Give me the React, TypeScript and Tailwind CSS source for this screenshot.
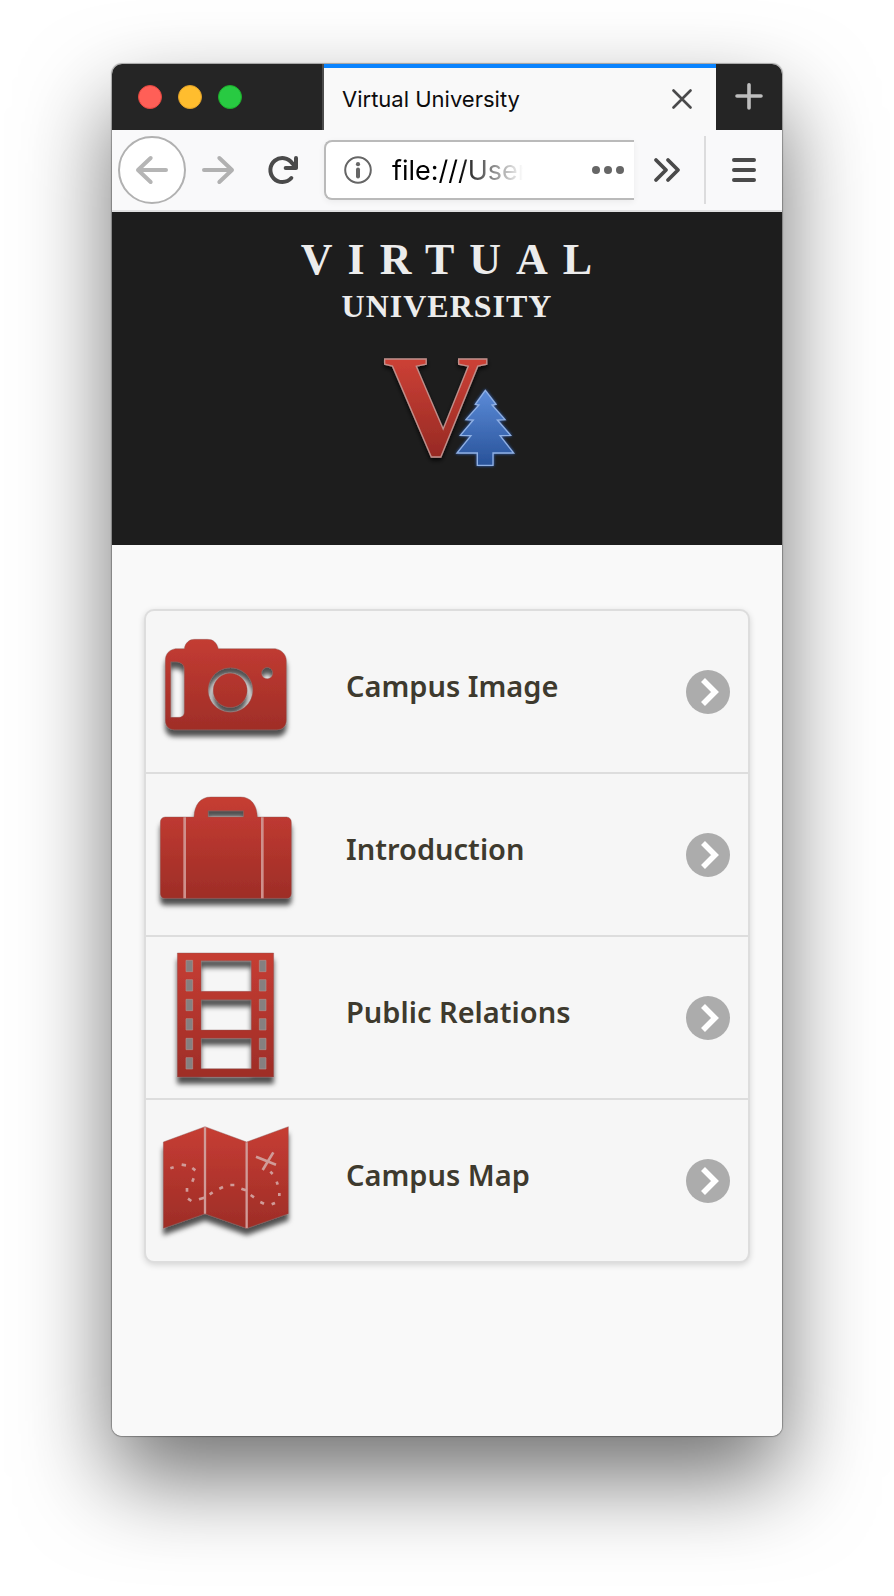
import type { ReactNode } from "react";

function Shaded({ id, y1, y2, children }: { id: string; y1: number; y2: number; children: ReactNode }) {
  return (
    <>
      <defs>
        <linearGradient id={`${id}-fill`} gradientUnits="userSpaceOnUse" x1="0" y1={y1} x2="0" y2={y2}>
          <stop offset="0" stopColor="#c63d33" />
          <stop offset="1" stopColor="#9e2d27" />
        </linearGradient>
        <filter id={`${id}-shadow`} x="-20%" y="-20%" width="140%" height="150%">
          <feDropShadow dx="0" dy="20" stdDeviation="8" floodColor="#000" floodOpacity="0.68" />
        </filter>
      </defs>
      <g
        fill={`url(#${id}-fill)`}
        fillRule="evenodd"
        filter={`url(#${id}-shadow)`}
        stroke="#8a5a57"
        strokeOpacity="0.4"
        strokeWidth="3"
      >
        {children}
      </g>
    </>
  );
}

function CameraIcon() {
  return (
    <svg viewBox="48 33 480 483" className="h-full w-full" aria-hidden="true">
      <Shaded id="camera" y1={100} y2={400}>
        <path d="M163 146C166 128 178 118 194 118H232C250 118 260 128 265 146H436C456 150 469 164 469 182V360C469 378 458 389 440 389H134C116 389 106 378 106 360V182C106 162 116 150 136 146ZM122 185V352H144C156 352 163 346 163 336V206C163 194 152 185 138 185ZM301 203A67 67 0 1 0 302 203ZM301 220A51 51 0 1 1 300 220ZM411 202A17 17 0 1 0 412 202Z" />
      </Shaded>
    </svg>
  );
}

function SuitcaseIcon() {
  return (
    <svg viewBox="48 12 480 483" className="h-full w-full" aria-hidden="true">
      <Shaded id="case" y1={82} y2={385}>
        <path d="M192 141C193 104 212 81 242 81H332C362 81 381 104 382 141H470Q484 143 484 157V370Q484 385 470 385H105Q91 385 91 370V157Q91 143 105 141ZM234 122V141H341V122Z" />
      </Shaded>
      <path d="M164 142V385M397 142V385" stroke="#cf8f8b" strokeWidth="8" />
    </svg>
  );
}

const filmSlots = [88, 146, 205, 263, 322, 380];

function FilmIcon() {
  return (
    <svg viewBox="48 18 480 483" className="h-full w-full" aria-hidden="true">
      <Shaded id="film" y1={66} y2={438}>
        <path d="M142 66H431V438H142ZM213 89V181H364V89ZM213 206V297H364V206ZM213 322V413H364V322Z" />
      </Shaded>
      <path
        d={filmSlots.map((y) => `M168 ${y}h20v34h-20ZM388 ${y}h20v34h-20Z`).join("")}
        fill="#858080"
        stroke="#b08f8d"
        strokeWidth="2"
      />
    </svg>
  );
}

function MapIcon() {
  return (
    <svg viewBox="48 27 480 483" className="h-full w-full" aria-hidden="true">
      <Shaded id="map" y1={108} y2={412}>
        <path d="M100 153L225 107L350 153L475 107V368L350 412L225 368L100 412Z" />
      </Shaded>
      <g fill="none" stroke="#d09b98">
        <path d="M225 109V368M350 154V411" strokeWidth="7" />
        <path d="M378 197L438 221M430 184L398 237" strokeWidth="8" />
        <path
          d="M121 232L131 229M155 221L168 223M187 231L196 238M191 262L187 272M171 291L171 302M174 323L184 330M207 325L223 320M239 310L248 304M268 293L279 288M301 282L313 282M334 293L348 298M362 312L372 319M391 333L402 338M425 340L435 336M448 315L448 306M443 281L440 272M428 249L421 242"
          strokeWidth="8"
        />
      </g>
    </svg>
  );
}

const links = [
  { label: "Campus Image", icon: <CameraIcon /> },
  { label: "Introduction", icon: <SuitcaseIcon /> },
  { label: "Public Relations", icon: <FilmIcon /> },
  { label: "Campus Map", icon: <MapIcon /> },
];

function UniversityMark() {
  return (
    <svg viewBox="291 402 420 360" className="h-[120px] w-[140px]" role="img" aria-label="Virtual University emblem">
      <defs>
        <linearGradient id="mark-red" x1="0" y1="0" x2="0" y2="1">
          <stop offset="0.2" stopColor="#cd4136" />
          <stop offset="0.8" stopColor="#982a24" />
        </linearGradient>
        <linearGradient id="mark-blue" x1="0" y1="0" x2="0" y2="1">
          <stop offset="0" stopColor="#5b8bd8" />
          <stop offset="1" stopColor="#285299" />
        </linearGradient>
        <filter id="mark-shadow" x="-20%" y="-20%" width="140%" height="140%">
          <feDropShadow dx="0" dy="8" stdDeviation="7" floodColor="#000" floodOpacity="0.8" />
        </filter>
        <filter id="mark-glow" x="-20%" y="-20%" width="140%" height="140%">
          <feDropShadow dx="0" dy="0" stdDeviation="5" floodColor="#2f66c4" floodOpacity="1" />
        </filter>
      </defs>
      <text
        x="467"
        y="706"
        textAnchor="middle"
        fontSize="438"
        stroke="#bf8f8b"
        strokeWidth="4"
        fill="url(#mark-red)"
        filter="url(#mark-shadow)"
        className="font-['Liberation_Serif',serif] font-bold"
      >
        V
      </text>
      <path
        d="M616 511L648 553L636 555L675 599L652 600L692 646L660 647L701 699H639V736H592V699H531L573 647L541 646L580 600L558 599L597 555L586 553Z"
        fill="url(#mark-blue)"
        stroke="#8fb0e4"
        strokeWidth="4"
        filter="url(#mark-glow)"
      />
    </svg>
  );
}

function TitleBar() {
  return (
    <div className="flex h-[66px] bg-[#252525]">
      <div className="flex w-[212px] shrink-0 items-center gap-4 border-r-2 border-[#4c4c4c] pl-[26px]">
        <button aria-label="Close window" className="size-6 rounded-full border border-[#e2463f] bg-[#ff5f57]" />
        <button aria-label="Minimize window" className="size-6 rounded-full border border-[#e0a028] bg-[#ffbd2e]" />
        <button aria-label="Zoom window" className="size-6 rounded-full border border-[#1dad2b] bg-[#28ca42]" />
      </div>
      <div className="flex min-w-0 flex-1 items-center justify-between border-t-4 border-[#0a84ff] bg-[#f9f9f9] pr-6 pl-[18px]">
        <span className="truncate font-['Inter',sans-serif] text-[22px] leading-7 text-[#0c0c0d]">Virtual University</span>
        <button aria-label="Close tab" className="shrink-0">
          <svg viewBox="0 0 20 20" className="size-5" fill="none" stroke="#4a4a4b" strokeWidth="2.6" strokeLinecap="round">
            <path d="M1.5 1.5L18.5 18.5M18.5 1.5L1.5 18.5" />
          </svg>
        </button>
      </div>
      <button aria-label="New tab" className="flex w-[66px] shrink-0 items-center justify-center">
        <svg viewBox="0 0 28 28" className="size-7" fill="none" stroke="#bebebe" strokeWidth="3.6" strokeLinecap="round">
          <path d="M2 13H26M14 1.8V25" />
        </svg>
      </button>
    </div>
  );
}

function Toolbar() {
  return (
    <div className="flex h-[82px] items-center border-b-2 border-[#e0e0e1] bg-[#f9f9fa] pl-[6px]">
      <button
        aria-label="Back"
        className="flex size-[68px] shrink-0 items-center justify-center rounded-full border-2 border-[#b1b1b1] bg-white"
      >
        <svg viewBox="0 0 102 102" className="size-[34px]" fill="none" stroke="#b5b5b5" strokeWidth="12" strokeLinecap="round" strokeLinejoin="round">
          <path d="M10 51H93M47 15L9 51L47 87" />
        </svg>
      </button>
      <button aria-label="Forward" className="flex h-16 w-16 shrink-0 items-center justify-center">
        <svg viewBox="0 0 102 102" className="size-[34px]" fill="none" stroke="#b1b1b1" strokeWidth="12" strokeLinecap="round" strokeLinejoin="round">
          <path d="M9 51H92M55 15L93 51L55 87" />
        </svg>
      </button>
      <button aria-label="Reload" className="flex h-16 w-[66px] shrink-0 items-center justify-center">
        <svg viewBox="498 309 102 102" className="size-[34px]" fill="none" stroke="#4a4a4a" strokeWidth="12" strokeLinecap="round" strokeLinejoin="round">
          <path d="M574 384A36 36 0 1 1 577 340L588 351" />
          <path d="M588 324V354H557" />
          <path d="M588 336V354H568Z" fill="#4a4a4a" stroke="none" />
        </svg>
      </button>
      <div className="ml-2 flex h-[60px] min-w-0 flex-1 items-center rounded-l-[8px] border-2 border-r-0 border-[#bababa] bg-white pr-2 pl-[18px] shadow-[0_2px_6px_rgba(0,0,0,0.06)]">
        <svg viewBox="0 0 28 28" className="size-7 shrink-0" aria-hidden="true">
          <circle cx="14" cy="14" r="12.8" fill="none" stroke="#666" strokeWidth="2" />
          <circle cx="14" cy="8.2" r="2.1" fill="#666" />
          <path d="M14 13.5V20.5" stroke="#666" strokeWidth="4" strokeLinecap="round" />
        </svg>
        <label htmlFor="address" className="sr-only whitespace-nowrap">
          Address
        </label>
        <input
          id="address"
          type="text"
          defaultValue="file:///User"
          className="ml-5 w-[146px] min-w-0 bg-transparent mask-[linear-gradient(to_right,black_45%,transparent_90%)] pt-[2px] font-['Inter',sans-serif] text-[27px] leading-9 text-black outline-none"
        />
        <button aria-label="Page actions" className="ml-auto shrink-0">
          <svg viewBox="0 0 36 12" className="h-3 w-9" fill="#666">
            <circle cx="6" cy="6" r="4" />
            <circle cx="18" cy="6" r="4" />
            <circle cx="30" cy="6" r="4" />
          </svg>
        </button>
      </div>
      <button aria-label="More tools" className="flex h-16 w-[66px] shrink-0 items-center justify-center">
        <svg viewBox="0 0 28 28" className="size-7" fill="none" stroke="#4a4a4a" strokeWidth="3.8" strokeLinecap="round" strokeLinejoin="round">
          <path d="M3 4L13 14L3 24M15 4L25 14L15 24" />
        </svg>
      </button>
      <div className="ml-1 h-[68px] w-[2px] shrink-0 bg-[#dcdcdd]" />
      <button aria-label="Open menu" className="flex h-16 w-[76px] shrink-0 items-center justify-center">
        <svg viewBox="0 0 24 24" className="size-6" fill="none" stroke="#4a4a4a" strokeWidth="4" strokeLinecap="round">
          <path d="M2 2H22M2 12H22M2 22H22" />
        </svg>
      </button>
    </div>
  );
}

export default function App() {
  return (
    <div className="overflow-hidden bg-white px-28 pt-16 pb-40">
      <div className="rounded-[10px] shadow-[0_0_1px_1px_rgba(0,0,0,0.3),0_42px_90px_rgba(0,0,0,0.56)]">
        <div className="overflow-hidden rounded-[10px] bg-[#f9f9f9]">
          <TitleBar />
          <Toolbar />
          <header className="flex flex-col items-center bg-[#1d1d1d] pt-6 pb-[71px] font-['Liberation_Serif',serif] font-bold text-[#ececec]">
            <h1 className="flex flex-col items-center">
              <span className="pl-[14px] text-[44px] leading-[48px] tracking-[15px]">VIRTUAL</span>
              <span className="text-[32px] leading-[44px] tracking-[1px]">UNIVERSITY</span>
            </h1>
            <div className="mt-[26px]">
              <UniversityMark />
            </div>
          </header>
          <main className="px-8 pt-16 pb-[173px]">
            <ul className="divide-y-2 divide-[#dddddd] overflow-hidden rounded-[10px] border-2 border-[#dddddd] bg-[#f6f6f6] shadow-[0_2px_6px_rgba(0,0,0,0.15)]">
              {links.map((link) => (
                <li key={link.label}>
                  <a href="#" className="flex items-center pr-[18px]">
                    <span className="h-[161px] w-40 shrink-0">{link.icon}</span>
                    <span className="ml-10 flex-1 pb-3 font-['Noto_Sans',sans-serif] text-[29px] leading-10 font-semibold text-[#3e3a2e]">
                      {link.label}
                    </span>
                    <svg viewBox="0 0 44 44" className="size-11 shrink-0" aria-hidden="true">
                      <circle cx="22" cy="22" r="22" fill="#acacac" />
                      <path d="M17 10L29 22L17 34" fill="none" stroke="#fff" strokeWidth="5.6" />
                    </svg>
                  </a>
                </li>
              ))}
            </ul>
          </main>
        </div>
      </div>
    </div>
  );
}
